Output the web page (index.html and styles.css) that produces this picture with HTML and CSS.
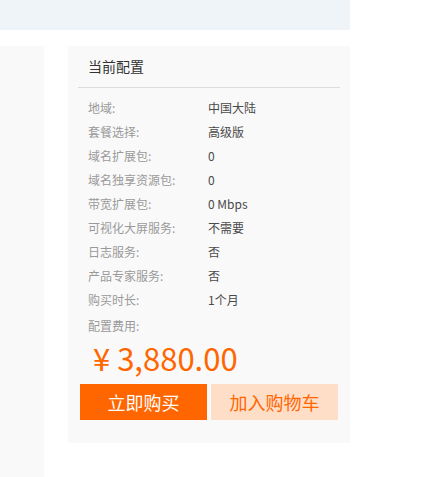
FILE: index.html
```html
<!DOCTYPE html>
<html lang="zh-CN">
<head>
<meta charset="utf-8">
<title>当前配置</title>
<link rel="stylesheet" href="styles.css">
</head>
<body>
<div class="topbar"></div>
<div class="main">
  <aside class="side"></aside>
  <section class="card">
    <h2 class="card-title">当前配置</h2>
    <dl class="specs">
      <div class="row"><dt>地域:</dt><dd>中国大陆</dd></div>
      <div class="row"><dt>套餐选择:</dt><dd>高级版</dd></div>
      <div class="row"><dt>域名扩展包:</dt><dd>0</dd></div>
      <div class="row"><dt>域名独享资源包:</dt><dd>0</dd></div>
      <div class="row"><dt>带宽扩展包:</dt><dd>0 Mbps</dd></div>
      <div class="row"><dt>可视化大屏服务:</dt><dd>不需要</dd></div>
      <div class="row"><dt>日志服务:</dt><dd>否</dd></div>
      <div class="row"><dt>产品专家服务:</dt><dd>否</dd></div>
      <div class="row"><dt>购买时长:</dt><dd>1个月</dd></div>
    </dl>
    <div class="fee-label">配置费用:</div>
    <div class="price">¥ 3,880.00</div>
    <div class="actions">
      <button class="btn btn-buy">立即购买</button>
      <button class="btn btn-cart">加入购物车</button>
    </div>
  </section>
</div>
</body>
</html>
```

FILE: styles.css
```css
* { box-sizing: border-box; }
html, body { margin: 0; padding: 0; overflow: hidden; }
body {
  font-family: "Noto Sans CJK SC", "Noto Sans", sans-serif;
  background: #fff;
  color: #333;
}
.topbar {
  width: 350px;
  height: 30px;
  background: #eff4f9;
}
.main {
  display: flex;
  gap: 24px;
  margin-top: 16px;
  align-items: flex-start;
}
.side {
  width: 44px;
  height: calc(100vh - 46px);
  background: #f9f9f9;
}
.card {
  width: 282px;
  background: #f9f9f9;
  padding: 0 10px 23px;
}
.card-title {
  margin: 0;
  height: 42px;
  line-height: 41px;
  padding-left: 10px;
  font-size: 14px;
  font-weight: normal;
  color: #333;
  border-bottom: 1px solid #dcdcdc;
}
.specs {
  margin: 8px 0 0;
  padding-left: 10px;
}
.row {
  display: flex;
  height: 24px;
  line-height: 24px;
  font-size: 12px;
}
.row dt {
  width: 120px;
  color: #999;
}
.row dd {
  margin: 0;
  color: #4a4a4a;
}
.fee-label {
  margin-top: 2px;
  padding-left: 10px;
  height: 24px;
  line-height: 24px;
  font-size: 12px;
  color: #999;
}
.price {
  padding-left: 15px;
  height: 40px;
  line-height: 40px;
  font-size: 31px;
  color: #ff6600;
}
.actions {
  display: flex;
  gap: 4px;
  margin: 6px 2px 0;
}
.btn {
  width: 127px;
  height: 36px;
  border: 0;
  padding: 0;
  font-family: inherit;
  font-size: 18px;
  cursor: pointer;
}
.btn-buy {
  background: #ff6600;
  color: #fff;
}
.btn-cart {
  background: #ffdec8;
  color: #ff6600;
}
```
